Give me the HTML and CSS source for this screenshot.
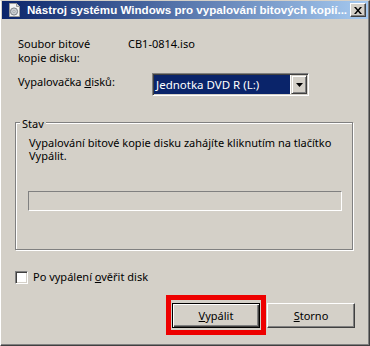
FILE: index.html
```html
<!DOCTYPE html>
<html lang="cs">
<head>
    <meta charset="UTF-8">
    <title>Nástroj systému Windows pro vypalování bitových kopií disku</title>
    <link rel="stylesheet" href="styles.css">
</head>
<body>
    <div class="window">
        <div class="titlebar">
            <svg class="app-icon" width="16" height="16" viewBox="0 0 16 16">
                <path d="M3.5 1.5h7l3 3v10h-10z" fill="#f4f4f4" stroke="#9a9a9a"/>
                <path d="M10.5 1.5v3h3" fill="#d8d8d8" stroke="#9a9a9a"/>
                <circle cx="8" cy="9.5" r="3.6" fill="#c8ccd0" stroke="#7d8288"/>
                <circle cx="8" cy="9.5" r="1" fill="#fff" stroke="#7d8288" stroke-width="0.6"/>
            </svg>
            <span class="title">Nástroj systému Windows pro vypalování bitových kopií...</span>
            <span class="close-btn">
                <svg width="8" height="7" viewBox="0 0 8 7">
                    <path d="M0 0h2l2 2.5l2-2.5h2l-3 3.5l3 3.5h-2l-2-2.5l-2 2.5h-2l3-3.5z" fill="#000"/>
                </svg>
            </span>
        </div>

        <div class="client">
            <div class="row-file">
                <span class="field-label">Soubor bitové<br>kopie disku:</span>
                <span class="field-value">CB1-0814.iso</span>
            </div>

            <div class="row-drive">
                <span class="field-label">Vypalovačka <u>d</u>isků:</span>
                <div class="combo">
                    <span class="combo-value">Jednotka DVD R (L:)</span>
                    <span class="combo-arrow">
                        <svg width="7" height="4" viewBox="0 0 7 4"><path d="M0 0h7l-3.5 4z" fill="#000"/></svg>
                    </span>
                </div>
            </div>

            <div class="group">
                <span class="group-title">Stav</span>
                <p class="status-text">Vypalování bitové kopie disku zahájíte kliknutím na tlačítko Vypálit.</p>
                <div class="progress"></div>
            </div>

            <div class="check-row">
                <span class="check-box"></span>
                <span>Po vypálení <u>o</u>věřit disk</span>
            </div>

            <div class="buttons">
                <div class="highlight">
                    <div class="btn btn-default"><u>V</u>ypálit</div>
                </div>
                <div class="btn"><u>S</u>torno</div>
            </div>
        </div>
    </div>
</body>
</html>
```

FILE: styles.css
```css
/* --- Page --- */
body {
    margin: 0;
    background-color: #d4d0c8;
    font-family: 'Noto Sans', sans-serif;
    font-size: 11px;
    line-height: 14px;
    color: #000;
}

/* --- Window frame (classic look) --- */
.window {
    width: 370px;
    height: 346px;
    box-sizing: border-box;
    border-top: 1px solid #d4d0c8;
    border-left: 1px solid #ffffff;
    border-right: 1px solid #404040;
    border-bottom: 1px solid #404040;
    box-shadow: inset -1px -1px #808080;
    padding: 0 1px 0 1px;
    display: flex;
    flex-direction: column;
}

.titlebar {
    height: 18px;
    display: flex;
    align-items: center;
    padding: 0 2px 0 4px;
    background: linear-gradient(to right, #0a246a, #a6caf0);
    color: #ffffff;
}

.app-icon {
    flex: none;
    margin-right: 5px;
}

.title {
    flex: 1;
    font-family: 'Liberation Sans', sans-serif;
    font-weight: bold;
    font-size: 11.6px;
    white-space: nowrap;
}

.close-btn {
    flex: none;
    width: 16px;
    height: 14px;
    box-sizing: border-box;
    background-color: #d4d0c8;
    border-top: 1px solid #ffffff;
    border-left: 1px solid #ffffff;
    border-right: 1px solid #404040;
    border-bottom: 1px solid #404040;
    box-shadow: inset -1px -1px #808080;
    display: flex;
    align-items: center;
    justify-content: center;
}

/* --- Dialog content --- */
.client {
    flex: 1;
    padding: 0 13px;
    display: flex;
    flex-direction: column;
}

.row-file {
    margin-top: 18px;
    display: flex;
    padding-left: 3px;
}

.row-file .field-label {
    width: 110px;
}

.row-drive {
    margin-top: 8px;
    display: flex;
    align-items: flex-start;
    padding-left: 3px;
}

.row-drive .field-label {
    width: 134px;
    margin-top: 2px;
}

/* Combo box */
.combo {
    width: 157px;
    height: 23px;
    box-sizing: border-box;
    border-top: 1px solid #808080;
    border-left: 1px solid #808080;
    border-right: 1px solid #ffffff;
    border-bottom: 1px solid #ffffff;
    box-shadow: inset 1px 1px #404040, inset -1px -1px #d4d0c8;
    padding: 1px;
    display: flex;
    background-color: #ffffff;
}

.combo-value {
    flex: 1;
    background-color: #0a246a;
    color: #ffffff;
    padding-left: 2px;
    font-size: 11.5px;
    line-height: 19px;
    margin-right: 1px;
}

.combo-arrow {
    width: 16px;
    box-sizing: border-box;
    background-color: #d4d0c8;
    border-top: 1px solid #d4d0c8;
    border-left: 1px solid #d4d0c8;
    border-right: 1px solid #404040;
    border-bottom: 1px solid #404040;
    box-shadow: inset 1px 1px #ffffff, inset -1px -1px #808080;
    display: flex;
    align-items: center;
    justify-content: center;
}

/* Group box "Stav" */
.group {
    margin-top: 26px;
    width: 338px;
    height: 128px;
    box-sizing: border-box;
    border: 1px solid #808080;
    box-shadow: inset 1px 1px #ffffff, 1px 1px #ffffff;
    display: flex;
    flex-direction: column;
    align-items: flex-start;
    padding: 0 10px 0 12px;
}

.group-title {
    margin: -6px 0 0 -8px;
    padding: 0 2px;
    background-color: #d4d0c8;
}

.status-text {
    margin: 5px 0 0 1px;
    line-height: 13px;
}

.progress {
    margin-top: 29px;
    width: 314px;
    height: 20px;
    box-sizing: border-box;
    border-top: 1px solid #808080;
    border-left: 1px solid #808080;
    border-right: 1px solid #ffffff;
    border-bottom: 1px solid #ffffff;
}

/* Checkbox */
.check-row {
    margin-top: 20px;
    display: flex;
    align-items: center;
    gap: 5px;
}

.check-box {
    width: 13px;
    height: 13px;
    box-sizing: border-box;
    background-color: #ffffff;
    border-top: 1px solid #808080;
    border-left: 1px solid #808080;
    border-right: 1px solid #ffffff;
    border-bottom: 1px solid #ffffff;
    box-shadow: inset 1px 1px #404040, inset -1px -1px #d4d0c8;
}

/* Buttons */
.buttons {
    margin-top: 19px;
    display: flex;
    justify-content: flex-end;
    gap: 7px;
}

.highlight {
    position: relative;
}

/* red annotation frame drawn over the default button */
.highlight::after {
    content: "";
    position: absolute;
    top: -8px;
    left: -6px;
    right: -6px;
    bottom: -7px;
    border: 5px solid #ee0000;
}

.btn {
    width: 88px;
    height: 25px;
    box-sizing: border-box;
    border-top: 1px solid #ffffff;
    border-left: 1px solid #ffffff;
    border-right: 1px solid #404040;
    border-bottom: 1px solid #404040;
    box-shadow: inset -1px -1px #808080;
    display: flex;
    align-items: center;
    justify-content: center;
}

.btn-default {
    border: 1px solid #000000;
    box-shadow: inset 1px 1px #ffffff, inset -1px -1px #404040, inset -2px -2px #808080;
}
```
